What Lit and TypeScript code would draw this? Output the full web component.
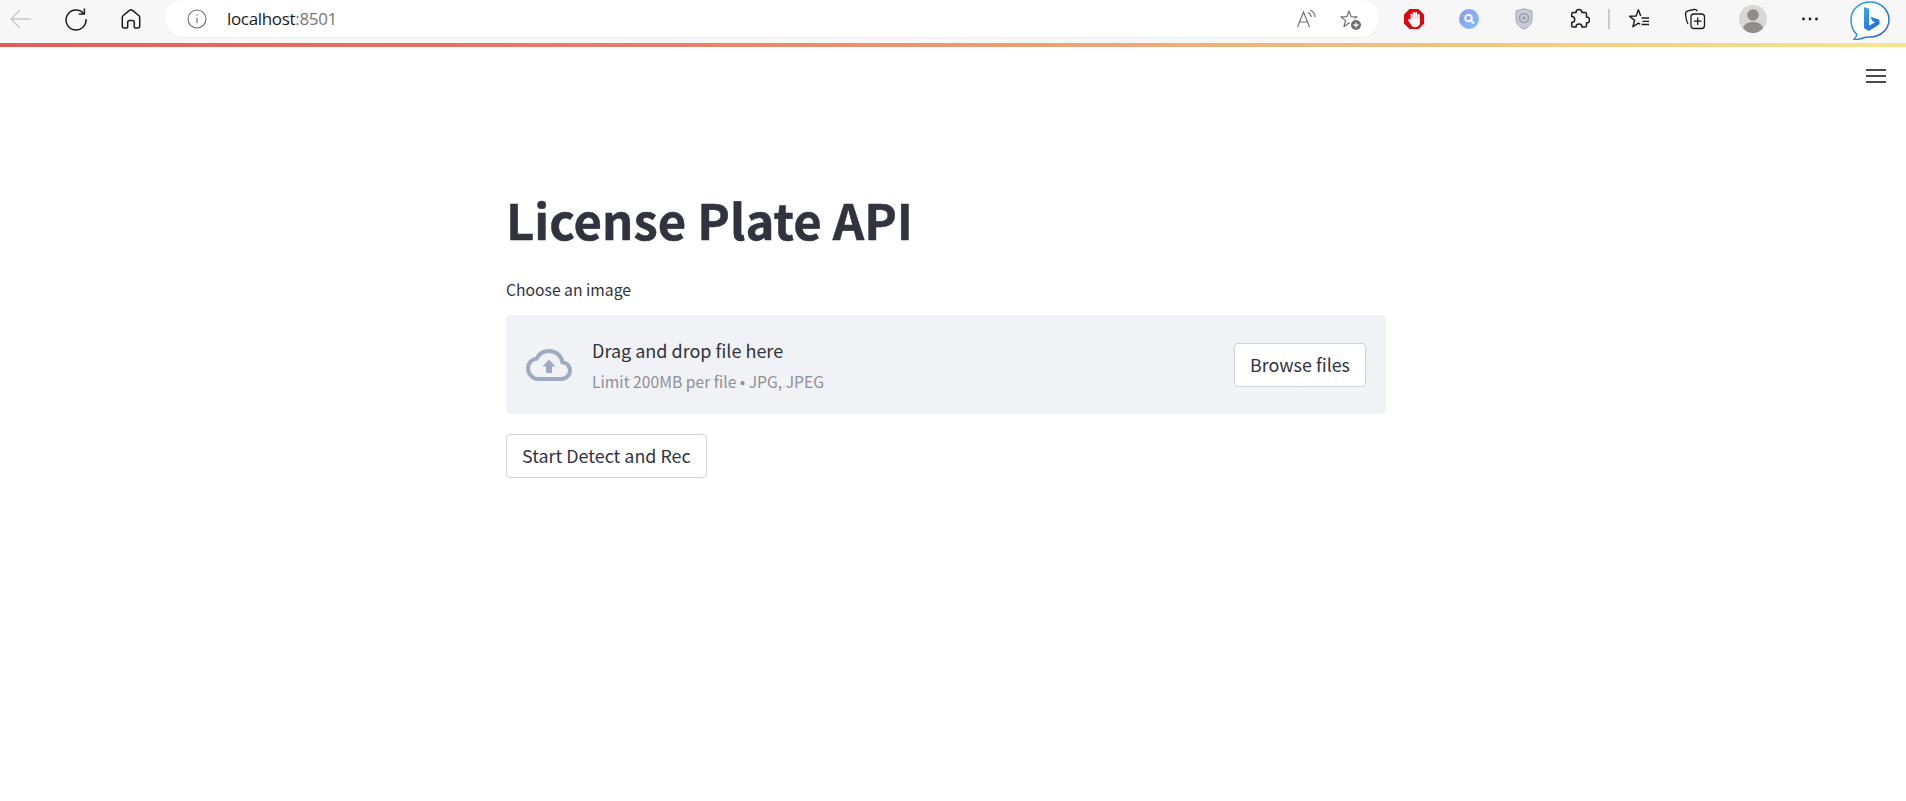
import {css, html, LitElement} from 'lit';
import {customElement} from 'lit/decorators.js';

@customElement('browser-bar')
export class BrowserBar extends LitElement {
  static override styles = css`
    :host {
      display: block;
    }
    .bar {
      display: flex;
      align-items: flex-start;
      height: 43px;
      background: #f7f7f7;
      overflow: hidden;
    }
    .btn {
      flex: none;
      width: 55px;
      height: 37px;
      display: flex;
      align-items: center;
      justify-content: center;
    }
    .first {
      margin-left: -7px;
    }
    .address {
      flex: none;
      display: flex;
      align-items: center;
      box-sizing: border-box;
      width: 1214px;
      height: 37px;
      margin: 0 7px;
      padding: 0 0 0 22px;
      background: #fff;
      border-radius: 18px;
      box-shadow: 0 1px 2px rgba(0, 0, 0, 0.04);
    }
    .url {
      margin-left: 20px;
      font: 17px 'Open Sans', sans-serif;
      letter-spacing: -0.33px;
      color: #1a1a1a;
    }
    .url span {
      color: #777;
    }
    .tail {
      margin-left: auto;
      display: flex;
      margin-right: 6px;
    }
    .tail .btn {
      width: 44px;
    }
    .sep {
      flex: none;
      width: 2px;
      height: 20px;
      margin: 9px 0 0 2px;
      background: #c9c9c9;
    }
    .fav {
      margin-left: 2px;
    }
    .profile {
      margin-left: 2px;
      width: 57px;
    }
    .dots {
      width: 57px;
    }
    .bing {
      width: 60px;
      height: 40px;
      margin-left: 2px;
    }
    .gradient {
      height: 4px;
      background: linear-gradient(90deg, #e25c56 0%, #e77f68 35%, #efb77c 68%, #f4cf83 85%, #f8e48f 100%);
    }
  `;

  override render() {
    return html`
      <div class="bar">
        <div class="btn first">
          <svg width="24" height="24" viewBox="0 0 24 24" fill="none" stroke="#c8c8c8" stroke-width="1.4">
            <path d="M22 12H2M11 3l-9 9 9 9" />
          </svg>
        </div>
        <div class="btn">
          <svg width="24" height="24" viewBox="0 0 24 24" fill="none" stroke="#1c1c1c" stroke-width="1.5">
            <path d="M19.600 6.500A10 10 0 1 0 22 12" />
            <path d="M20.400 1.500v5.600h-5.600" />
          </svg>
        </div>
        <div class="btn">
          <svg width="22" height="22" viewBox="0 0 22 22" fill="none" stroke="#1c1c1c" stroke-width="1.5">
            <path
              d="M9.200 2.600a2.800 2.800 0 0 1 3.600 0l6.200 5.200a2 2 0 0 1 .7 1.500V18a2 2 0 0 1-2 2h-2.400a1 1 0 0 1-1-1v-4.500a2 2 0 0 0-2-2h-2.600a2 2 0 0 0-2 2V19a1 1 0 0 1-1 1H4.300a2 2 0 0 1-2-2V9.300a2 2 0 0 1 .7-1.500z"
            />
          </svg>
        </div>
        <div class="address">
          <svg width="20" height="20" viewBox="0 0 20 20" fill="none" stroke="#6b6b6b" stroke-width="1.100">
            <circle cx="10" cy="10" r="9" />
            <path d="M10 8.800v5.400M10 5.400v1.300" />
          </svg>
          <div class="url">localhost<span>:8501</span></div>
          <div class="tail">
            <div class="btn">
              <svg width="20" height="20" viewBox="0 0 20 20" fill="none" stroke="#707070" stroke-width="1.200">
                <path d="M.5 18 6.500 3 12.500 18M2.500 13h8" />
                <path d="M11 3.500c2 .8 3 2.500 3 4.500M13 1c3 1.200 4.800 3.600 5 7" />
              </svg>
            </div>
            <div class="btn">
              <svg width="24" height="24" viewBox="0 0 24 24" fill="none">
                <path
                  transform="translate(1 1)"
                  d="M9 3 11.100 8.600 17.100 8.900 12.400 12.600 14 18.400 9 15.100 4 18.400 5.600 12.600 .9 8.900 6.900 8.600z"
                  stroke="#6e6e6e"
                  stroke-width="1.200"
                  stroke-linejoin="round"
                />
                <circle cx="17" cy="18" r="6.500" fill="#fff" />
                <circle cx="17" cy="18" r="5" fill="#6e6e6e" />
                <path d="M17 15.500v5M14.500 18h5" stroke="#fff" stroke-width="1.300" />
              </svg>
            </div>
          </div>
        </div>
        <div class="btn">
          <svg width="22" height="22" viewBox="0 0 22 22">
            <path d="M6.500 1h9L21 6.500v9L15.500 21h-9L1 15.500v-9z" fill="#e0060c" />
            <path d="M7.500 11h9.300v4c0 2.500-2.200 4.300-4.800 4.300-2 0-3.200-1-4-2.500L5.200 12.500c-.6-1 .6-2 1.500-1.200l.8.900z" fill="#fff" />
            <path d="M8.600 12V6.500M10.900 12V4.800M13.200 12V5.200M15.600 12V7" stroke="#fff" stroke-width="2.100" stroke-linecap="round" />
          </svg>
        </div>
        <div class="btn">
          <svg width="20" height="20" viewBox="0 0 20 20">
            <defs>
              <linearGradient id="sg" x1="0" y1="0" x2="1" y2="1">
                <stop offset="0" stop-color="#8d9bec" />
                <stop offset="1" stop-color="#7fc0fb" />
              </linearGradient>
            </defs>
            <circle cx="10" cy="10" r="10" fill="url(#sg)" />
            <circle cx="9.500" cy="9" r="3.300" fill="none" stroke="#fff" stroke-width="2" />
            <path d="m12 11.500 3 3" stroke="#fff" stroke-width="2" />
          </svg>
        </div>
        <div class="btn">
          <svg width="18" height="22" viewBox="0 0 18 22">
            <path d="M9 .8 17 3v8c0 5-3.500 8.500-8 10.200C4.500 19.500 1 16 1 11V3z" fill="#c6cbd5" stroke="#a5a9b3" />
            <circle cx="9" cy="10" r="4.500" fill="none" stroke="#9aa0ad" stroke-width="1.600" />
            <circle cx="9" cy="10" r="1.800" fill="#9aa0ad" />
          </svg>
        </div>
        <div class="btn">
          <svg width="22" height="22" viewBox="0 0 22 22" fill="none" stroke="#1c1c1c" stroke-width="1.500">
            <path
              d="M8 4.500a3 3 0 0 1 6 0h3.200a1.300 1.300 0 0 1 1.300 1.300V9a3 3 0 0 1 0 6v2.700a1.300 1.300 0 0 1-1.300 1.300H14a3 3 0 0 0-6 0H5a1.300 1.300 0 0 1-1.300-1.300V14.500a3 3 0 0 0 0-6V5.800A1.300 1.300 0 0 1 5 4.500z"
            />
          </svg>
        </div>
        <div class="sep"></div>
        <div class="btn fav">
          <svg width="22" height="22" viewBox="0 0 22 22" fill="none" stroke="#1c1c1c" stroke-width="1.300" stroke-linejoin="round">
            <path transform="translate(-.5 -1.500) scale(1.100)" d="M10.500 16.100 9 15.100 4 18.400 5.600 12.600 .9 8.900 6.900 8.600 9 3 11.100 8.600" />
            <path d="M12.500 10H20M13.500 13.300H20M12.500 16.500H20" />
          </svg>
        </div>
        <div class="btn">
          <svg width="22" height="22" viewBox="0 0 22 22" fill="none" stroke="#1c1c1c" stroke-width="1.300">
            <path d="M4 16C2.500 13 1.800 9.500 1.500 6.500c-.2-2 .7-3.300 2.500-3.700l6-1.300c1.500-.3 2.700.3 3.300 1.800" />
            <rect x="7" y="6" width="13.500" height="14.500" rx="3" />
            <path d="M13.700 9.500v7.500M10 13.200h7.500" />
          </svg>
        </div>
        <div class="btn profile">
          <svg width="28" height="28" viewBox="0 0 28 28">
            <circle cx="14" cy="14" r="14" fill="#d8d7d6" />
            <circle cx="14" cy="10" r="5.800" fill="#8f8c8b" />
            <path d="M4 23c1.500-4 5-6 10-6s8.500 2 10 6c-2.500 3-6 5-10 5s-7.500-2-10-5z" fill="#8f8c8b" />
          </svg>
        </div>
        <div class="btn dots">
          <svg width="18" height="4" viewBox="0 0 18 4" fill="#1c1c1c">
            <circle cx="2.500" cy="2" r="1.400" />
            <circle cx="9" cy="2" r="1.400" />
            <circle cx="15.500" cy="2" r="1.400" />
          </svg>
        </div>
        <div class="btn bing">
          <svg width="40" height="39" viewBox="0 0 40 39">
            <defs>
              <linearGradient id="bg" x1="0" y1="0" x2="1" y2="1">
                <stop offset="0" stop-color="#2fa8e8" />
                <stop offset="1" stop-color="#2a5fd6" />
              </linearGradient>
            </defs>
            <path
              d="M20 1c10.500 0 19 7.800 19 17.500S30.500 36 20 36c-2.500 0-6 .5-8 1.300-3 1-7 1.700-8 1 1.800-1.600 3-3.700 2.500-5.500C3 30 1 24.800 1 18.500 1 8.800 9.500 1 20 1z"
              fill="#fff"
              stroke="url(#bg)"
              stroke-width="1.500"
            />
            <path d="M14 6l5 1.700v17l6-3.400-2.800-1.300-1.800-4.400 9 3.200v4.500L19 30l-5-2.800z" fill="url(#bg)" />
          </svg>
        </div>
      </div>
      <div class="gradient"></div>
    `;
  }
}

@customElement('app-root')
export class AppRoot extends LitElement {
  static override styles = css`
    :host {
      display: block;
      min-height: 801px;
      background: #fff;
      color: #31333f;
      font-family: 'Noto Sans CJK JP', 'Open Sans', sans-serif;
    }
    .menu {
      display: flex;
      justify-content: flex-end;
      padding: 22px 20px 0 0;
    }
    .menu svg {
      display: block;
    }
    .main {
      box-sizing: border-box;
      width: 880px;
      margin-left: 506px;
      padding-top: 101px;
    }
    h1 {
      margin: 0;
      font-size: 49px;
      font-weight: 700;
      line-height: 70px;
      -webkit-text-stroke: 0.5px #31333f;
    }
    label {
      display: block;
      margin-top: 24px;
      font-size: 15.7px;
      line-height: 24px;
    }
    .drop {
      display: flex;
      align-items: center;
      box-sizing: border-box;
      height: 99px;
      margin-top: 13px;
      padding: 0 20px;
      background: #f0f2f6;
      border-radius: 5px;
    }
    .drop svg {
      flex: none;
    }
    .text {
      margin-left: 20px;
      flex: 1;
    }
    .title {
      font-size: 18px;
      line-height: 28px;
    }
    .sub {
      margin-top: 6px;
      font-size: 15.7px;
      line-height: 24px;
      color: #8e909b;
    }
    button {
      display: block;
      box-sizing: border-box;
      height: 44px;
      padding: 0 15px 2px;
      background: #fff;
      border: 1px solid #d0d2d8;
      border-radius: 4px;
      color: #31333f;
      font-family: inherit;
      font-size: 17.9px;
      line-height: 24px;
    }
    .start {
      margin-top: 20px;
    }
  `;

  override render() {
    return html`
      <browser-bar></browser-bar>
      <div class="menu">
        <svg width="20" height="14" viewBox="0 0 20 14" fill="#4a4a4a">
          <rect width="20" height="2" />
          <rect y="6" width="20" height="2" />
          <rect y="12" width="20" height="2" />
        </svg>
      </div>
      <div class="main">
        <h1>License Plate API</h1>
        <label>Choose an image</label>
        <div class="drop">
          <svg width="46" height="32" viewBox="0 0 46 32">
            <path
              d="M36.500 13.300C35.300 6.500 29.800 2 23 2c-5.300 0-9.900 3-12.200 7.400C5.800 10 2 14.200 2 19.300 2 25.200 6.700 30 12.500 30H35c5.300 0 9-4 9-8.700 0-4.300-3.400-7.700-7.500-8z"
              fill="none"
              stroke="#9ea9c4"
              stroke-width="4"
            />
            <path d="M23 10.500 29.500 17.500H26V24H20V17.500H16.500z" fill="#9ea9c4" />
          </svg>
          <div class="text">
            <div class="title">Drag and drop file here</div>
            <div class="sub">Limit 200MB per file • JPG, JPEG</div>
          </div>
          <button>Browse files</button>
        </div>
        <button class="start">Start Detect and Rec</button>
      </div>
    `;
  }
}
